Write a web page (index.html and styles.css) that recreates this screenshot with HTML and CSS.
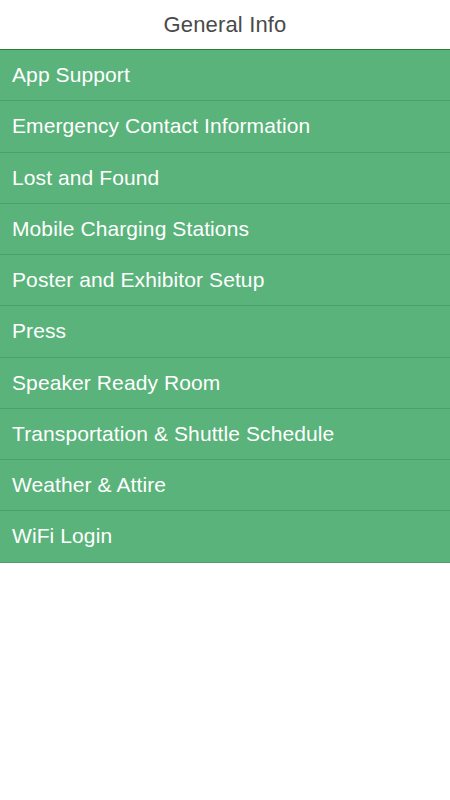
FILE: index.html
```html
<!DOCTYPE html>
<html>
<head>
<meta charset="utf-8">
<link rel="stylesheet" href="styles.css">
</head>
<body>
<header class="topbar"><h1 class="title">General Info</h1></header>
<ul class="menu">
  <li class="item">App Support</li>
  <li class="item">Emergency Contact Information</li>
  <li class="item">Lost and Found</li>
  <li class="item">Mobile Charging Stations</li>
  <li class="item">Poster and Exhibitor Setup</li>
  <li class="item">Press</li>
  <li class="item">Speaker Ready Room</li>
  <li class="item">Transportation &amp; Shuttle Schedule</li>
  <li class="item">Weather &amp; Attire</li>
  <li class="item">WiFi Login</li>
</ul>
</body>
</html>
```
FILE: styles.css
```css
html, body {
  margin: 0;
  padding: 0;
  background: #ffffff;
  font-family: "Liberation Sans", Arial, sans-serif;
}
.topbar {
  height: 49px;
  display: flex;
  align-items: center;
  justify-content: center;
  border-bottom: 1px solid #2a7a38;
  box-sizing: content-box;
}
.title {
  margin: 0;
  font-size: 22px;
  font-weight: normal;
  color: #4a4a4a;
  letter-spacing: 0.15px;
}
.menu {
  list-style: none;
  margin: 0;
  padding: 0;
  background: #5ab37a;
}
.item {
  height: 50.25px;
  display: flex;
  align-items: center;
  padding-left: 12px;
  border-bottom: 1px solid #4e9f69;
  color: #ffffff;
  font-size: 21px;
  letter-spacing: 0.1px;
}
```
